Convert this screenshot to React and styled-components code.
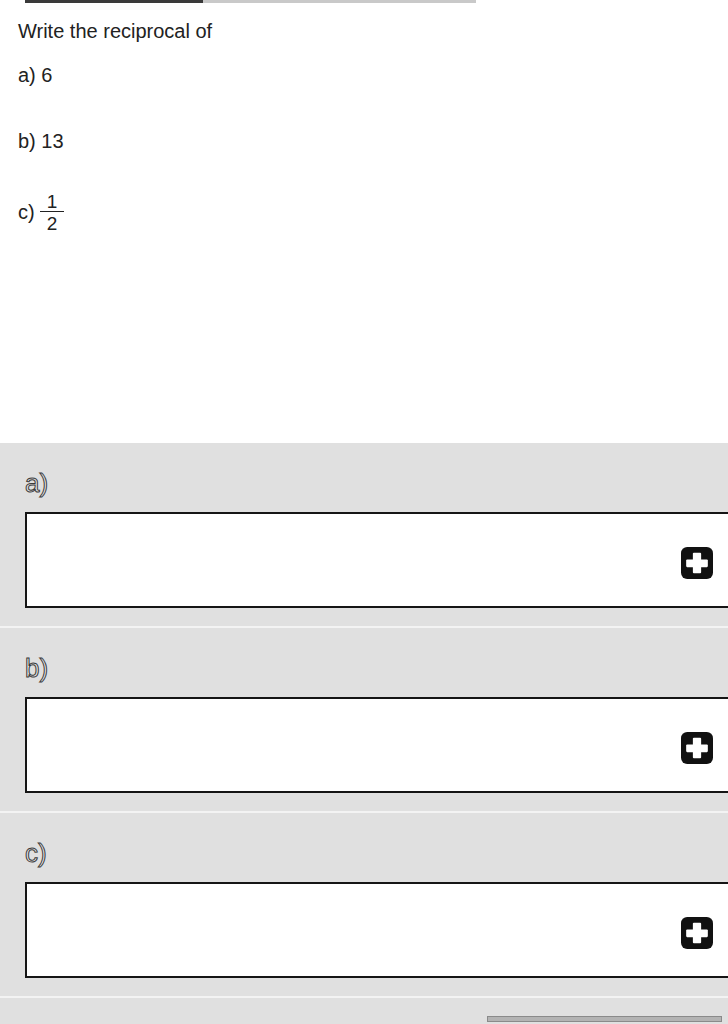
import React from "react";
import styled, { createGlobalStyle } from "styled-components";

const GlobalStyle = createGlobalStyle`
  html, body {
    margin: 0;
    padding: 0;
    background: #ffffff;
    overflow-x: hidden;
  }
  body {
    font-family: "Liberation Sans", Arial, sans-serif;
  }
`;

const Page = styled.div`
  width: 728px;
  overflow: hidden;
`;

const Progress = styled.div`
  display: flex;
  margin-left: 25px;
  width: 451px;
  height: 3px;
  background: #c9c9c9;
`;

const ProgressFill = styled.div`
  height: 100%;
  background: #3a3a3a;
`;

const Question = styled.div`
  box-sizing: border-box;
  min-height: 440px;
  padding: 16px 18px 0;
  color: #222222;
  font-size: 20px;
  line-height: 24px;
`;

const Prompt = styled.div`
  margin-bottom: 20px;
`;

const Parts = styled.div`
  display: flex;
  flex-direction: column;
  gap: 42px;
`;

const Part = styled.div`
  display: flex;
  align-items: center;
  gap: 5px;
  height: 24px;
  margin-top: ${props => props.$offset || 0}px;
`;

const Fraction = styled.span`
  display: inline-flex;
  flex-direction: column;
  align-items: center;
  font-size: 19px;
  line-height: 17px;
  margin: -8px 0;
`;

const Numerator = styled.span`
  padding: 0 7px 1px;
  border-bottom: 1px solid #222222;
`;

const Denominator = styled.span`
  padding: 3px 7px 0;
`;

const Answers = styled.div`
  background: #e0e0e0;
`;

const AnswerSection = styled.section`
  height: 185px;
  box-sizing: border-box;
  padding: 27px 0 0 25px;
  border-bottom: 2px solid #f3f3f3;
`;

const PartLabel = styled.div`
  font-size: 26px;
  line-height: 26px;
  height: 26px;
  color: #e4e4e4;
  -webkit-text-stroke: 1px #3a3a3a;
  margin-bottom: 16px;
`;

const AnswerBox = styled.div`
  box-sizing: border-box;
  width: 720px;
  height: 96px;
  display: flex;
  align-items: center;
  justify-content: flex-end;
  padding: 5px 30px 0 0;
  background: #ffffff;
  border: 2px solid #151515;
`;

const AddButton = styled.button`
  width: 32px;
  height: 32px;
  padding: 0;
  border: 0;
  background: none;
  cursor: pointer;
  display: block;
`;

const Footer = styled.div`
  height: 26px;
  display: flex;
  justify-content: flex-end;
  align-items: flex-end;
  padding: 0 6px 2px 0;
  box-sizing: border-box;
`;

const ScrollThumb = styled.div`
  width: 235px;
  height: 6px;
  box-sizing: border-box;
  background: #b3b3b3;
  border: 1px solid #8a8a8a;
`;

const PlusIcon = () => (
  <svg width="32" height="32" viewBox="0 0 31 31">
    <rect x="0" y="0" width="31" height="31" rx="6" fill="#111111" />
    <rect x="11.5" y="5.5" width="8" height="20" rx="1" fill="#ffffff" />
    <rect x="5" y="12" width="21" height="7.5" rx="1" fill="#ffffff" />
  </svg>
);

const parts = ["a", "b", "c"];

const App = () => (
  <Page>
    <GlobalStyle />
    <Progress>
      <ProgressFill style={{ width: `${(178 / 451) * 100}%` }} />
    </Progress>

    <Question>
      <Prompt>Write the reciprocal of</Prompt>
      <Parts>
        <Part>a) 6</Part>
        <Part>b) 13</Part>
        <Part $offset={5}>
          <span>c)</span>
          <Fraction>
            <Numerator>1</Numerator>
            <Denominator>2</Denominator>
          </Fraction>
        </Part>
      </Parts>
    </Question>

    <Answers>
      {parts.map(p => (
        <AnswerSection key={p}>
          <PartLabel>{p})</PartLabel>
          <AnswerBox>
            <AddButton type="button" aria-label={`Add answer ${p}`}>
              <PlusIcon />
            </AddButton>
          </AnswerBox>
        </AnswerSection>
      ))}
      <Footer>
        <ScrollThumb />
      </Footer>
    </Answers>
  </Page>
);

export default App;
